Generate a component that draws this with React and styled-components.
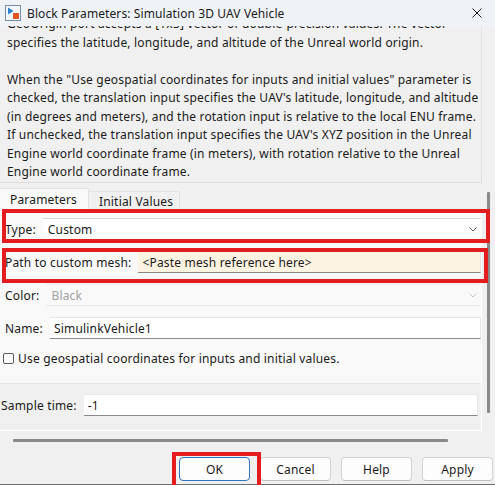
import React from "react";
import styled, { createGlobalStyle } from "styled-components";

const Global = createGlobalStyle`
    html, body {
        margin: 0;
        padding: 0;
        background: #f0f0f0;
    }
    body {
        font-family: "Noto Sans", "Open Sans", sans-serif;
        font-size: 12px;
        letter-spacing: 0.18px;
        color: #1a1a1a;
    }
`;

const Window = styled.div`
    position: relative;
    width: 495px;
    height: 485px;
    overflow: hidden;
    display: flex;
    flex-direction: column;
    background: #f0f0f0;
`;

const TitleBar = styled.div`
    height: 26px;
    flex: none;
    display: flex;
    align-items: center;
    justify-content: space-between;
    background: #eff3f8;
    position: relative;
    z-index: 1;
`;

const TitleLeft = styled.div`
    display: flex;
    align-items: center;
    gap: 6px;
    padding-left: 5px;
    letter-spacing: 0.1px;
`;

const CloseButton = styled.div`
    width: 46px;
    height: 26px;
    display: flex;
    align-items: center;
    justify-content: center;
    margin-right: -5px;
`;

const Upper = styled.div`
    display: flex;
    flex: none;
    height: 157px;
`;

const Description = styled.div`
    width: 481px;
    overflow: hidden;
    border-right: 1px solid #e2e2e2;
    border-bottom: 1px solid #dcdcdc;
    background: #f0f0f0;
`;

// scrolled a little, so the first line sits under the title bar
const DescText = styled.div`
    margin-top: -11px;
    padding-left: 7px;
    line-height: 18.5px;
    white-space: nowrap;
`;

const Middle = styled.div`
    display: flex;
    flex: none;
    margin-top: 5px;
`;

const ParamsArea = styled.div`
    width: 482px;
    display: flex;
    flex-direction: column;
`;

const Tabs = styled.div`
    display: flex;
    align-items: flex-end;
    height: 22px;
`;

const Tab = styled.div`
    box-sizing: border-box;
    height: ${(p) => (p.$active ? "22px" : "19px")};
    width: ${(p) => (p.$active ? "89px" : "92px")};
    padding-left: 10px;
    display: flex;
    align-items: center;
    white-space: nowrap;
    background: ${(p) => (p.$active ? "#f9f9f9" : "#f0f0f0")};
    border: 1px solid #e3e3e3;
    border-bottom: none;
    border-left: ${(p) => (p.$active ? "none" : "1px solid #e3e3e3")};
    margin-left: ${(p) => (p.$active ? "0" : "-1px")};
`;

const Panel = styled.div`
    box-sizing: border-box;
    height: 221px;
    display: flex;
    flex-direction: column;
    background: #f9f9f9;
    border-right: 1px solid #ffffff;
    border-bottom: 1px solid #ffffff;
`;

const Fields = styled.div`
    display: flex;
    flex-direction: column;
    gap: 11px;
    padding: 8px 0 0 5px;
`;

const Row = styled.div`
    position: relative;
    display: flex;
    align-items: center;
    gap: 7px;
    height: 22px;
`;

const Label = styled.span`
    flex: none;
`;

const Select = styled.div`
    flex: 1;
    box-sizing: border-box;
    height: 22px;
    display: flex;
    align-items: center;
    justify-content: space-between;
    padding: 0 4px 0 5px;
    background: ${(p) => (p.$disabled ? "#f9f9f9" : "#ffffff")};
    border-top: 1px solid ${(p) => (p.$disabled ? "#ececec" : "#d6d6d6")};
    border-bottom: 1px solid ${(p) => (p.$disabled ? "#e6e6e6" : "#9a9a9a")};
    color: ${(p) => (p.$disabled ? "#a0a0a0" : "#1a1a1a")};
`;

const Input = styled.div`
    flex: 1;
    box-sizing: border-box;
    height: 22px;
    display: flex;
    align-items: center;
    padding-left: 4px;
    margin-right: ${(p) => (p.$inset ? "3px" : "0")};
    background: ${(p) => (p.$cream ? "#fdf3e2" : "#ffffff")};
    border-top: 1px solid ${(p) => (p.$cream ? "#fdf3e2" : "#e8e8e8")};
    border-right: 1px solid #e6e6e6;
    border-bottom: 1px solid #8a8a8a;
`;

const CheckRow = styled.div`
    display: flex;
    align-items: center;
    gap: 4px;
    height: 16px;
    margin-left: -2px;
`;

const Checkbox = styled.div`
    width: 11px;
    height: 11px;
    box-sizing: border-box;
    border: 1px solid #5a5a5a;
    border-radius: 2px;
    background: #fbfbfb;
`;

const SampleGroup = styled.div`
    flex: 1;
    margin-top: 17px;
    padding-top: 10px;
    padding-left: 1px;
    background: #f0f0f0;
    border-top: 1px solid #e6e6e6;
`;

const VScroll = styled.div`
    flex: 1;
    display: flex;
    justify-content: center;
    padding-top: 4px;
`;

const VThumb = styled.div`
    width: 3px;
    height: 221px;
    background: #8a8a8a;
    border-radius: 1px;
`;

const HScroll = styled.div`
    height: 3px;
    margin-top: 8px;
    padding-left: 13px;
    flex: none;
`;

const HThumb = styled.div`
    width: 435px;
    height: 3px;
    background: #8a8a8a;
    border-radius: 1px;
`;

const Buttons = styled.div`
    display: flex;
    justify-content: flex-end;
    gap: 10px;
    padding-right: 2px;
    margin-top: 15px;
    flex: none;
`;

const Button = styled.div`
    position: relative;
    box-sizing: border-box;
    width: 71px;
    height: 24px;
    display: flex;
    align-items: center;
    justify-content: center;
    background: #fdfdfd;
    border: 1px solid ${(p) => (p.$primary ? "#2f74c0" : "#d3d3d3")};
    border-bottom-color: ${(p) => (p.$primary ? "#2f74c0" : "#c0c0c0")};
    border-radius: 4px;
`;

const BottomEdge = styled.div`
    margin-top: auto;
    height: 1px;
    background: #6d6d6d;
    flex: none;
`;

// red annotation frame drawn over a row or button
const Highlight = styled.div`
    position: absolute;
    left: ${(p) => p.$l}px;
    right: ${(p) => p.$r}px;
    top: ${(p) => p.$t}px;
    bottom: ${(p) => p.$b}px;
    border: 4px solid #e31d1f;
    pointer-events: none;
    z-index: 2;
`;

const BlockIcon = () => (
    <svg width="16" height="16" viewBox="0 0 16 16">
        <rect x="0.5" y="0.5" width="15" height="15" fill="#f4f8fc" stroke="#7a8da3" />
        <path d="M3 2.5 L3 9.5 L8.5 6 Z" fill="#2d7fd0" />
        <rect x="8" y="8" width="6" height="6" fill="#e2561f" />
    </svg>
);

const Chevron = ({ faded }) => (
    <svg width="8" height="5" viewBox="0 0 8 5">
        <polyline
            points="0.5,0.5 4,4 7.5,0.5"
            fill="none"
            stroke={faded ? "#c4c4c4" : "#555"}
            strokeWidth="1"
        />
    </svg>
);

const CloseIcon = () => (
    <svg width="10" height="10" viewBox="0 0 10 10">
        <path d="M0.5 0.5 L9.5 9.5 M9.5 0.5 L0.5 9.5" stroke="#1a1a1a" strokeWidth="1" />
    </svg>
);

const App = () => {
    return (
        <Window>
            <Global />
            <TitleBar>
                <TitleLeft>
                    <BlockIcon />
                    <span>Block Parameters: Simulation 3D UAV Vehicle</span>
                </TitleLeft>
                <CloseButton>
                    <CloseIcon />
                </CloseButton>
            </TitleBar>

            <Upper>
                <Description>
                    <DescText>
                        GeoOrigin port accepts a [1x3] vector of double-precision values. The vector
                        <br />
                        specifies the latitude, longitude, and altitude of the Unreal world origin.
                        <br />
                        <br />
                        When the "Use geospatial coordinates for inputs and initial values" parameter is
                        <br />
                        checked, the translation input specifies the UAV's latitude, longitude, and altitude
                        <br />
                        (in degrees and meters), and the rotation input is relative to the local ENU frame.
                        <br />
                        If unchecked, the translation input specifies the UAV's XYZ position in the Unreal
                        <br />
                        Engine world coordinate frame (in meters), with rotation relative to the Unreal
                        <br />
                        Engine world coordinate frame.
                    </DescText>
                </Description>
            </Upper>

            <Middle>
                <ParamsArea>
                    <Tabs>
                        <Tab $active>Parameters</Tab>
                        <Tab>Initial Values</Tab>
                    </Tabs>
                    <Panel>
                        <Fields>
                            <Row>
                                <Label>Type:</Label>
                                <Select>
                                    <span>Custom</span>
                                    <Chevron />
                                </Select>
                                <Highlight $l={-3} $r={-9} $t={-9} $b={-3} />
                            </Row>
                            <Row>
                                <Label>Path to custom mesh:</Label>
                                <Input $cream>&lt;Paste mesh reference here&gt;</Input>
                                <Highlight $l={-3} $r={-7} $t={-3} $b={-10} />
                            </Row>
                            <Row>
                                <Label>Color:</Label>
                                <Select $disabled>
                                    <span>Black</span>
                                    <Chevron faded />
                                </Select>
                            </Row>
                            <Row>
                                <Label>Name:</Label>
                                <Input>SimulinkVehicle1</Input>
                            </Row>
                            <CheckRow>
                                <Checkbox />
                                <span>Use geospatial coordinates for inputs and initial values.</span>
                            </CheckRow>
                        </Fields>
                        <SampleGroup>
                            <Row>
                                <Label>Sample time:</Label>
                                <Input $inset>-1</Input>
                            </Row>
                        </SampleGroup>
                    </Panel>
                </ParamsArea>
                <VScroll>
                    <VThumb />
                </VScroll>
            </Middle>

            <HScroll>
                <HThumb />
            </HScroll>

            <Buttons>
                <Button $primary>
                    OK
                    <Highlight $l={-8} $r={-12} $t={-6} $b={-10} />
                </Button>
                <Button>Cancel</Button>
                <Button>Help</Button>
                <Button>Apply</Button>
            </Buttons>
            <BottomEdge />
        </Window>
    );
};

export default App;
